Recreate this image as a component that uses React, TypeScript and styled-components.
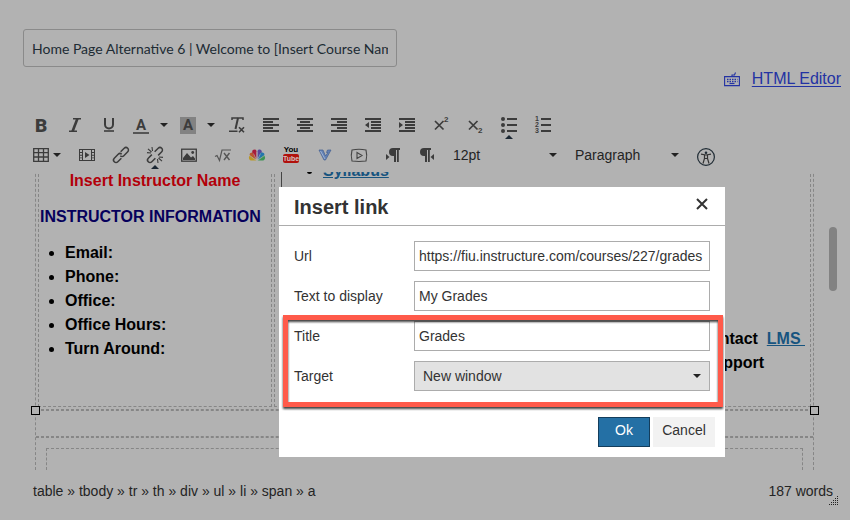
import React from "react";
import styled, { createGlobalStyle } from "styled-components";

const ink = "#3c3c3c";
const shade = "#b2b2b2";
const dash = "#868686";

const GlobalStyle = createGlobalStyle`
  *, *::before, *::after { box-sizing: border-box; }
  body {
    margin: 0;
    background: ${shade};
    color: #242424;
    font-family: "Liberation Sans", Arial, sans-serif;
    font-size: 14px;
  }
  button, input, select { font: inherit; color: inherit; margin: 0; }
`;

const Page = styled.main`
  position: relative;
  display: flex;
  flex-direction: column;
  height: 100vh;
  min-height: 520px;
  overflow: hidden;
`;

const Header = styled.header`
  display: flex;
  flex-direction: column;
  align-items: flex-start;
  padding: 29px 9px 19px 23px;
`;

const PageTitle = styled.input`
  width: calc(46% - 2px);
  height: 38px;
  padding: 0 8px;
  border: 1px solid #8a8a8a;
  border-radius: 3px;
  background: transparent;
  color: #202b34;
  font-family: Lato, sans-serif;
  font-size: 14px;
  outline: none;
`;

const EditorLink = styled.a`
  align-self: flex-end;
  display: flex;
  align-items: center;
  gap: 12px;
  height: 24px;
  color: #2332a3;
  font-size: 16px;
  text-decoration: none;
  span { text-decoration: underline; text-underline-offset: 2px; }
`;

const Toolbar = styled.div`
  display: flex;
  height: 30px;
  padding-left: 24px;
`;

const ToolButton = styled.button<{ $wide?: boolean; $marked?: boolean }>`
  position: relative;
  display: flex;
  align-items: center;
  justify-content: ${(p) => (p.$wide ? "flex-start" : "center")};
  gap: ${(p) => (p.$wide ? "11px" : "0")};
  width: ${(p) => (p.$wide ? "47px" : "34px")};
  height: 30px;
  padding: ${(p) => (p.$wide ? "0 0 0 7px" : "0")};
  border: 0;
  background: none;
  color: ${ink};
  &::after {
    content: ${(p) => (p.$marked ? '""' : "none")};
    position: absolute;
    left: 13px;
    bottom: 1px;
    border: 4px solid transparent;
    border-top: 0;
    border-bottom-color: #1b2733;
  }
`;

const TableButton = styled(ToolButton)`
  width: 46px;
  padding-left: 9px;
  gap: 4px;
`;

const Caret = styled.span`
  width: 8px;
  height: 4px;
  border: 4px solid transparent;
  border-top-color: #222;
  border-bottom: 0;
`;

const SelectBox = styled.div`
  display: grid;
  grid-template-columns: 1fr 17px;
  align-items: center;
  width: 122px;
  height: 30px;
  & > select { grid-area: 1 / 1 / 2 / 3; }
  & > ${Caret} { grid-area: 1 / 2; pointer-events: none; }
`;

const ToolSelect = styled.select`
  appearance: none;
  width: 100%;
  height: 30px;
  padding: 0 18px 0 9px;
  border: 0;
  background: none;
  color: #242424;
`;

const Icon = styled.svg<{ $size?: number }>`
  flex: none;
  width: ${(p) => p.$size ?? 16}px;
  height: ${(p) => p.$size ?? 16}px;
  overflow: visible;
  fill: none;
  stroke: none;
`;

const Editor = styled.section`
  flex: 1;
  display: flex;
  min-height: 0;
  margin-top: 2px;
  overflow: hidden;
`;

const Document = styled.div`
  flex: 1;
  display: flex;
  flex-direction: column;
  margin: -13px 0 0 35px;
  border: 1px dashed ${dash};
  border-width: 0 1px;
  color: #000;
  font-size: 16px;
  font-weight: bold;
  line-height: 24px;
`;

const Columns = styled.div`
  position: relative;
  display: grid;
  grid-template-columns: 234px 1fr;
  gap: 2px;
  height: 251px;
  padding: 0 2px 2px;
  border-bottom: 1px dashed ${dash};
`;

const Cell = styled.div`
  border: 1px dashed ${dash};
  border-top: 0;
`;

const ResizeHandle = styled.span<{ $side: "left" | "right" }>`
  position: absolute;
  ${(p) => (p.$side === "left" ? "left: -5px" : "right: -6px")};
  bottom: -6px;
  width: 9px;
  height: 9px;
  border: 1px solid #000;
  background: ${shade};
`;

const InstructorName = styled.h2`
  margin: 10px 0 12px;
  color: #b3000a;
  font-size: 16px;
  line-height: 24px;
  text-align: center;
`;

const InfoHeading = styled.h3`
  margin: 0 0 12px 1px;
  color: #06005c;
  font-size: 16px;
  line-height: 24px;
  white-space: nowrap;
`;

const ContactList = styled.ul`
  margin: 0;
  padding-left: 26px;
`;

const CourseLinks = styled.ul`
  height: 60px;
  margin: 0 0 0 6px;
  padding-left: 41px;
  border-left: 1px solid #444;
`;

const DocLink = styled.a`
  color: #17547f;
  text-decoration: underline;
`;

const Support = styled.p`
  width: max-content;
  margin: 108px 5px 0 auto;
`;

const Spacer = styled.div`
  height: 27px;
  border: 1px dashed ${dash};
  border-width: 1px 0;
`;

const Lower = styled.div`
  flex: 1;
  display: flex;
  padding: 10px 10px 0;
  border-top: 1px dashed ${dash};
`;

const NestedTable = styled.div`
  flex: 1;
  border: 1px dashed ${dash};
  border-bottom: 0;
`;

const ScrollTrack = styled.div`
  width: 36px;
  padding: 55px 0 0 15px;
`;

const ScrollThumb = styled.div`
  width: 8px;
  height: 64px;
  border-radius: 4px;
  background: #828282;
`;

const StatusBar = styled.footer`
  position: relative;
  display: flex;
  justify-content: space-between;
  height: 50px;
  padding: 11px 17px 0 33px;
  line-height: 20px;
`;

const Grip = styled.svg`
  position: absolute;
  right: 11px;
  bottom: 14px;
  width: 10px;
  height: 10px;
`;

const Dialog = styled.form`
  position: absolute;
  top: 187px;
  left: 279px;
  width: 446px;
  background: #fff;
  color: #333;
`;

const DialogHeader = styled.div`
  display: flex;
  align-items: center;
  justify-content: space-between;
  height: 39px;
  padding: 0 16px 0 15px;
  border-bottom: 1px solid #acacac;
`;

const DialogTitle = styled.h1`
  margin: 2px 0 0;
  font-size: 20px;
  line-height: 24px;
`;

const CloseButton = styled.button`
  display: flex;
  padding: 0 0 2px;
  border: 0;
  background: none;
`;

const Fields = styled.div`
  display: flex;
  flex-direction: column;
  gap: 10px;
  padding: 15px;
`;

const Field = styled.div`
  display: grid;
  grid-template-columns: 120px 1fr;
  align-items: center;
  height: 30px;
`;

const TextInput = styled.input`
  width: 100%;
  height: 30px;
  padding: 0 4px;
  border: 1px solid #acacac;
  background: #fff;
  outline: none;
`;

const TargetBox = styled(SelectBox)`
  width: 100%;
`;

const TargetSelect = styled(ToolSelect)`
  padding-left: 8px;
  border: 1px solid #acacac;
  background: #e2e2e2;
  color: #333;
`;

const Highlight = styled.div`
  position: absolute;
  top: 128px;
  left: 4px;
  right: 2px;
  height: 92px;
  border: 5px solid #ff5a4a;
  filter: drop-shadow(0 2px 1px rgba(0, 0, 0, 0.75));
  pointer-events: none;
`;

const Actions = styled.div`
  display: flex;
  justify-content: flex-end;
  gap: 3px;
  padding: 11px 10px 10px;
`;

const ActionButton = styled.button<{ $primary?: boolean }>`
  width: ${(p) => (p.$primary ? "52px" : "62px")};
  height: 30px;
  padding: 0 0 4px;
  border: ${(p) => (p.$primary ? "1px solid #133d5c" : "0")};
  background: ${(p) => (p.$primary ? "#2470a5" : "#f2f2f2")};
  color: ${(p) => (p.$primary ? "#fff" : "#333")};
`;

const full = "M0 1h16v2H0z M0 7h16v2H0z M0 13h16v2H0z";
const frame = "M0 1h16v2H0z M0 13h16v2H0z M6 4h10v2H6z M6 7h10v2H6z M6 10h10v2H6z";
const pilcrow = "M4 0h7v2H9.800v12H8V2H7v12H5V8H4a4 4 0 0 1 0-8z";

const Solid = ({ d }: { d: string }) => (
  <Icon viewBox="0 0 16 16"><path d={d} fill={ink} fillRule="evenodd" /></Icon>
);

const icons: Record<string, React.ReactNode> = {
  Bold: (
    <Icon viewBox="0 0 16 16">
      <text x="2" y="15" fill={ink} fontFamily="Roboto, sans-serif" fontSize="19" fontWeight="900">B</text>
    </Icon>
  ),
  Italic: (
    <Icon viewBox="0 0 16 16" stroke={ink}>
      <path d="M6 1.700h8M2 14.300h8" stroke={ink} strokeWidth="1.400" />
      <path d="M10.500 1.500l-5 13" stroke={ink} strokeWidth="2.600" />
    </Icon>
  ),
  Underline: (
    <Icon viewBox="0 0 16 16">
      <path d="M4 1v6.500a4 4 0 0 0 8 0V1" stroke={ink} strokeWidth="2" />
      <path d="M3 14h10" stroke={ink} strokeWidth="1.600" />
    </Icon>
  ),
  "Text color": (
    <Icon viewBox="0 0 16 16">
      <text x="8" y="13" textAnchor="middle" fill={ink} fontFamily="Roboto, sans-serif" fontSize="15" fontWeight="700">A</text>
      <path d="M0 15h16v2H0z" fill="#555" />
    </Icon>
  ),
  "Background color": (
    <Icon viewBox="0 0 16 16">
      <path d="M0 0h16v17H0z" fill="#828282" />
      <text x="8" y="13" textAnchor="middle" fill={ink} fontFamily="Roboto, sans-serif" fontSize="15" fontWeight="700">A</text>
    </Icon>
  ),
  "Clear formatting": (
    <Icon viewBox="0 0 16 16">
      <path d="M3 3V1h11v2" stroke={ink} strokeWidth="1.500" />
      <path d="M9 1L6.500 12" stroke={ink} strokeWidth="2" />
      <path d="M0 14.300h8.500M10 10.300l5 5M15 10.300l-5 5" stroke={ink} strokeWidth="1.600" />
    </Icon>
  ),
  "Align left": <Solid d={`${full} M0 4h10v2H0z M0 10h10v2H0z`} />,
  "Align center": <Solid d={`${full} M3 4h10v2H3z M3 10h10v2H3z`} />,
  "Align right": <Solid d={`${full} M6 4h10v2H6z M6 10h10v2H6z`} />,
  "Decrease indent": <Solid d={`${frame} M4 5v6L0 8z`} />,
  "Increase indent": <Solid d={`${frame} M0 5v6l4-3z`} />,
  Superscript: (
    <Icon viewBox="0 0 16 16">
      <path d="M2 4l8.500 8.500M10.500 4L2 12.500" stroke={ink} strokeWidth="1.700" />
      <text x="11" y="5" fill={ink} fontSize="8" fontWeight="bold">2</text>
    </Icon>
  ),
  Subscript: (
    <Icon viewBox="0 0 16 16">
      <path d="M2 4l8.500 8.500M10.500 4L2 12.500" stroke={ink} strokeWidth="1.700" />
      <text x="11" y="16" fill={ink} fontSize="8" fontWeight="bold">2</text>
    </Icon>
  ),
  "Bulleted list": (
    <Icon viewBox="0 0 16 16">
      <path d="M6 1h10v2H6z M6 7h10v2H6z M6 13h10v2H6z" fill={ink} />
      <g fill={ink}><circle cx="2" cy="2" r="2" /><circle cx="2" cy="8" r="2" /><circle cx="2" cy="14" r="2" /></g>
    </Icon>
  ),
  "Numbered list": (
    <Icon viewBox="0 0 16 16">
      <path d="M6 1h10v2H6z M6 7h10v2H6z M6 13h10v2H6z" fill={ink} />
      <g fill={ink} fontSize="7" fontWeight="bold"><text x="0" y="4">1</text><text x="0" y="10">2</text><text x="0" y="16">3</text></g>
    </Icon>
  ),
  Table: (
    <Icon viewBox="0 0 16 16">
      <path d="M.7 1.700h14.600v12.600H.7zM.7 5.700h14.600M.7 10h14.600M5.500 2v12M10.500 2v12" stroke={ink} strokeWidth="1.300" />
    </Icon>
  ),
  "Insert media": (
    <Solid d="M0 2h16v12H0z M4 3v10h8V3z M1 3v2h2V3z M1 6v1.700h2V6z M1 8.700v1.700h2V8.700z M1 11.300v1.700h2v-1.700z M13 3v2h2V3z M13 6v1.700h2V6z M13 8.700v1.700h2V8.700z M13 11.300v1.700h2v-1.700z M6 5l4.500 3L6 11z" />
  ),
  "Insert link": (
    <Icon viewBox="0 0 16 16">
      <g transform="rotate(-45 8 8)" stroke={ink} strokeWidth="1.500">
        <path d="M6 10.500H1a2.500 2.500 0 0 1 0-5h5.500A2.500 2.500 0 0 1 9 8" />
        <path d="M10 5.500h5a2.500 2.500 0 0 1 0 5H9.500A2.500 2.500 0 0 1 7 8" />
      </g>
    </Icon>
  ),
  "Remove link": (
    <Icon viewBox="0 0 16 16">
      <g transform="rotate(-45 8 8)" stroke={ink} strokeWidth="1.500">
        <path d="M6 10.500H1a2.500 2.500 0 0 1 0-5h5" />
        <path d="M10 5.500h5a2.500 2.500 0 0 1 0 5h-5" />
      </g>
      <path d="M5.500 4L5 0M4.500 5L1 1.800M4 6L0 5.600M10.500 12l.5 4M11.500 11l3.500 3.200M12 10l4 .4" stroke={ink} strokeWidth="1.100" />
    </Icon>
  ),
  "Insert image": (
    <Icon viewBox="0 0 16 16">
      <rect x=".7" y="2.200" width="14.600" height="12" stroke={ink} strokeWidth="1.300" />
      <path d="M2 13V11l4-5 4 4.500L12 9l2 2.500V13z" fill={ink} />
      <circle cx="11.700" cy="5.500" r="1.400" fill={ink} />
    </Icon>
  ),
  "Insert equation": (
    <Icon viewBox="0 0 16 16">
      <path d="M0 9.500l2-1 2.500 5L7 3h9" stroke="#555" strokeWidth="1.200" />
      <path d="M9 6l5.500 7M14.500 6L9 13" stroke="#555" strokeWidth="1.400" />
    </Icon>
  ),
  "Media gallery": (
    <Icon viewBox="0 0 16 16">
      <path d="M7.500 13.500L1.500 8.500C-.8 9-.5 13 2 13.500z" fill="#b99726" />
      <path d="M7.500 13L5 6C3 4.500-.5 6 1 8.500z" fill="#b9562f" />
      <path d="M7.500 12V4C6.500 1.500 2 2.500 3.500 6z" fill="#a81c3a" />
      <path d="M8.500 12V4c1-2.500 5.500-1.500 4 2z" fill="#59489b" />
      <path d="M8.500 13L11 6c2-1.500 5.500 0 4 2.500z" fill="#2376ad" />
      <path d="M8.500 13.500l6-5c2.300.5 2 4.500-.5 5z" fill="#3d9455" />
      <path d="M4.500 6.500l3 6.500M1 8.800l6.500 4.700M11.500 6.500l-3 6.500M15 8.800l-6.500 4.700M8 5v8" stroke={shade} strokeWidth=".6" />
    </Icon>
  ),
  YouTube: (
    <Icon viewBox="0 0 16 16">
      <text x="8" y="5" textAnchor="middle" fill="#000" fontSize="8" fontWeight="bold">You</text>
      <rect y="7" width="16" height="9" rx="2" fill="#b1110c" />
      <text x="8" y="14" textAnchor="middle" fill="#d2c0c0" fontSize="7" fontWeight="bold">Tube</text>
    </Icon>
  ),
  Video: (
    <Icon viewBox="0 0 16 16">
      <path d="M2 3h4l2.500 6L11 5.500H9.500L10.500 3H14L8.500 13H7z" fill="#6382b5" stroke="#435f91" strokeWidth=".7" />
      <path d="M3.500 4l4.500 8" stroke="#9eb2d3" />
    </Icon>
  ),
  "Embed video": (
    <Icon viewBox="0 0 16 16">
      <path d="M1 3c4-.8 10-.8 14 0 .8 3 .8 8 0 11-4 .5-10 .5-14 0-.8-3-.8-8 0-11zM6 5.500l5 3-5 3z" stroke="#454545" strokeWidth="1.100" />
    </Icon>
  ),
  "Left to right": (
    <Icon viewBox="0 0 16 16"><g fill={ink}><path d={pilcrow} transform="translate(4 1)" /><path d="M1 7v6l3.500-3z" /></g></Icon>
  ),
  "Right to left": (
    <Icon viewBox="0 0 16 16"><g fill={ink}><path d={pilcrow} transform="translate(1 1)" /><path d="M15 7v6l-3.500-3z" /></g></Icon>
  ),
  "Accessibility checker": (
    <Icon viewBox="0 0 18 18" $size={18}>
      <circle cx="10" cy="11" r="8.400" stroke="#202c35" strokeWidth="1.200" />
      <circle cx="10" cy="6.800" r="1.300" fill="#202c35" />
      <path d="M5 8.200l5 .8 5-.8M8.500 9v3.500L7 17.500M11.500 9v3.500l1.500 5M8.500 12.500h3" stroke="#333" strokeWidth="1.200" />
    </Icon>
  ),
};

const rowOne = [
  "Bold", "Italic", "Underline", "Text color", "Background color", "Clear formatting",
  "Align left", "Align center", "Align right", "Decrease indent", "Increase indent",
  "Superscript", "Subscript", "Bulleted list", "Numbered list",
];
const rowTwo = [
  "Insert media", "Insert link", "Remove link", "Insert image", "Insert equation",
  "Media gallery", "YouTube", "Video", "Embed video", "Left to right", "Right to left",
];
const withCaret = ["Text color", "Background color"];
const marked = ["Bulleted list", "Remove link"];
const gripDots = [0, 2, 4, 6, 8].flatMap((row) =>
  [0, 2, 4, 6, 8].filter((col) => row + col >= 8).map((col) => `M${col} ${row}h1v1h-1z`)
);

const Tool = ({ name }: { name: string }) => {
  const wide = withCaret.includes(name);
  return (
    <ToolButton type="button" aria-label={name} $wide={wide} $marked={marked.includes(name)}>
      {icons[name]}
      {wide && <Caret />}
    </ToolButton>
  );
};

export default function App() {
  return (
    <Page>
      <GlobalStyle />
      <Header>
        <PageTitle aria-label="Page title" defaultValue="Home Page Alternative 6 | Welcome to [Insert Course Name]" />
        <EditorLink href="#html">
          <Icon viewBox="0 0 16 16" aria-hidden="true">
            <path d="M.6 5.600h14.800v9H.6zM8 5.500V4h2.500l1-2.500" stroke="#2332a3" strokeWidth="1.100" />
            <path d="M3 8.500h10.500M3 10.700h10.500" stroke="#2332a3" strokeWidth="1.300" strokeDasharray="1.500 1" />
            <path d="M5.500 12.500h5" stroke="#2332a3" strokeWidth="1.200" />
          </Icon>
          <span>HTML Editor</span>
        </EditorLink>
      </Header>

      <Toolbar role="toolbar" aria-label="Formatting">
        {rowOne.map((name) => <Tool key={name} name={name} />)}
      </Toolbar>
      <Toolbar role="toolbar" aria-label="Insert">
        <TableButton type="button" aria-label="Table" $wide>
          {icons.Table}
          <Caret />
        </TableButton>
        {rowTwo.map((name) => <Tool key={name} name={name} />)}
        <SelectBox>
          <ToolSelect aria-label="Font size"><option>12pt</option></ToolSelect>
          <Caret />
        </SelectBox>
        <SelectBox>
          <ToolSelect aria-label="Block format"><option>Paragraph</option></ToolSelect>
          <Caret />
        </SelectBox>
        <Tool name="Accessibility checker" />
      </Toolbar>

      <Editor>
        <Document>
          <Columns>
            <Cell>
              <InstructorName>Insert Instructor Name</InstructorName>
              <InfoHeading>INSTRUCTOR INFORMATION</InfoHeading>
              <ContactList>
                <li>Email:</li>
                <li>Phone:</li>
                <li>Office:</li>
                <li>Office Hours:</li>
                <li>Turn Around:</li>
              </ContactList>
            </Cell>
            <Cell>
              <CourseLinks>
                <li><DocLink href="#syllabus">Syllabus</DocLink></li>
              </CourseLinks>
              <Support>
                Contact&nbsp; <DocLink href="#lms">LMS&nbsp;</DocLink>
                <br />
                &nbsp;Support
              </Support>
            </Cell>
            <ResizeHandle $side="left" />
            <ResizeHandle $side="right" />
          </Columns>
          <Spacer />
          <Lower><NestedTable /></Lower>
        </Document>
        <ScrollTrack><ScrollThumb /></ScrollTrack>
      </Editor>

      <StatusBar>
        <span>table » tbody » tr » th » div » ul » li » span » a</span>
        <span>187 words</span>
        <Grip viewBox="0 0 10 10" aria-hidden="true"><path d={gripDots.join("")} fill="#222" /></Grip>
      </StatusBar>

      <Dialog role="dialog" aria-labelledby="dialog-title" onSubmit={(e) => e.preventDefault()}>
        <DialogHeader>
          <DialogTitle id="dialog-title">Insert link</DialogTitle>
          <CloseButton type="button" aria-label="Close">
            <Icon viewBox="0 0 14 14" $size={14}>
              <path d="M2 1l10 10M12 1L2 11" stroke="#333" strokeWidth="2" />
            </Icon>
          </CloseButton>
        </DialogHeader>
        <Fields>
          <Field>
            <label htmlFor="url">Url</label>
            <TextInput id="url" defaultValue="https://fiu.instructure.com/courses/227/grades" />
          </Field>
          <Field>
            <label htmlFor="text">Text to display</label>
            <TextInput id="text" defaultValue="My Grades" />
          </Field>
          <Field>
            <label htmlFor="title">Title</label>
            <TextInput id="title" defaultValue="Grades" />
          </Field>
          <Field>
            <label htmlFor="target">Target</label>
            <TargetBox>
              <TargetSelect id="target"><option>New window</option></TargetSelect>
              <Caret />
            </TargetBox>
          </Field>
        </Fields>
        <Actions>
          <ActionButton type="submit" $primary>Ok</ActionButton>
          <ActionButton type="button">Cancel</ActionButton>
        </Actions>
        <Highlight />
      </Dialog>
    </Page>
  );
}
